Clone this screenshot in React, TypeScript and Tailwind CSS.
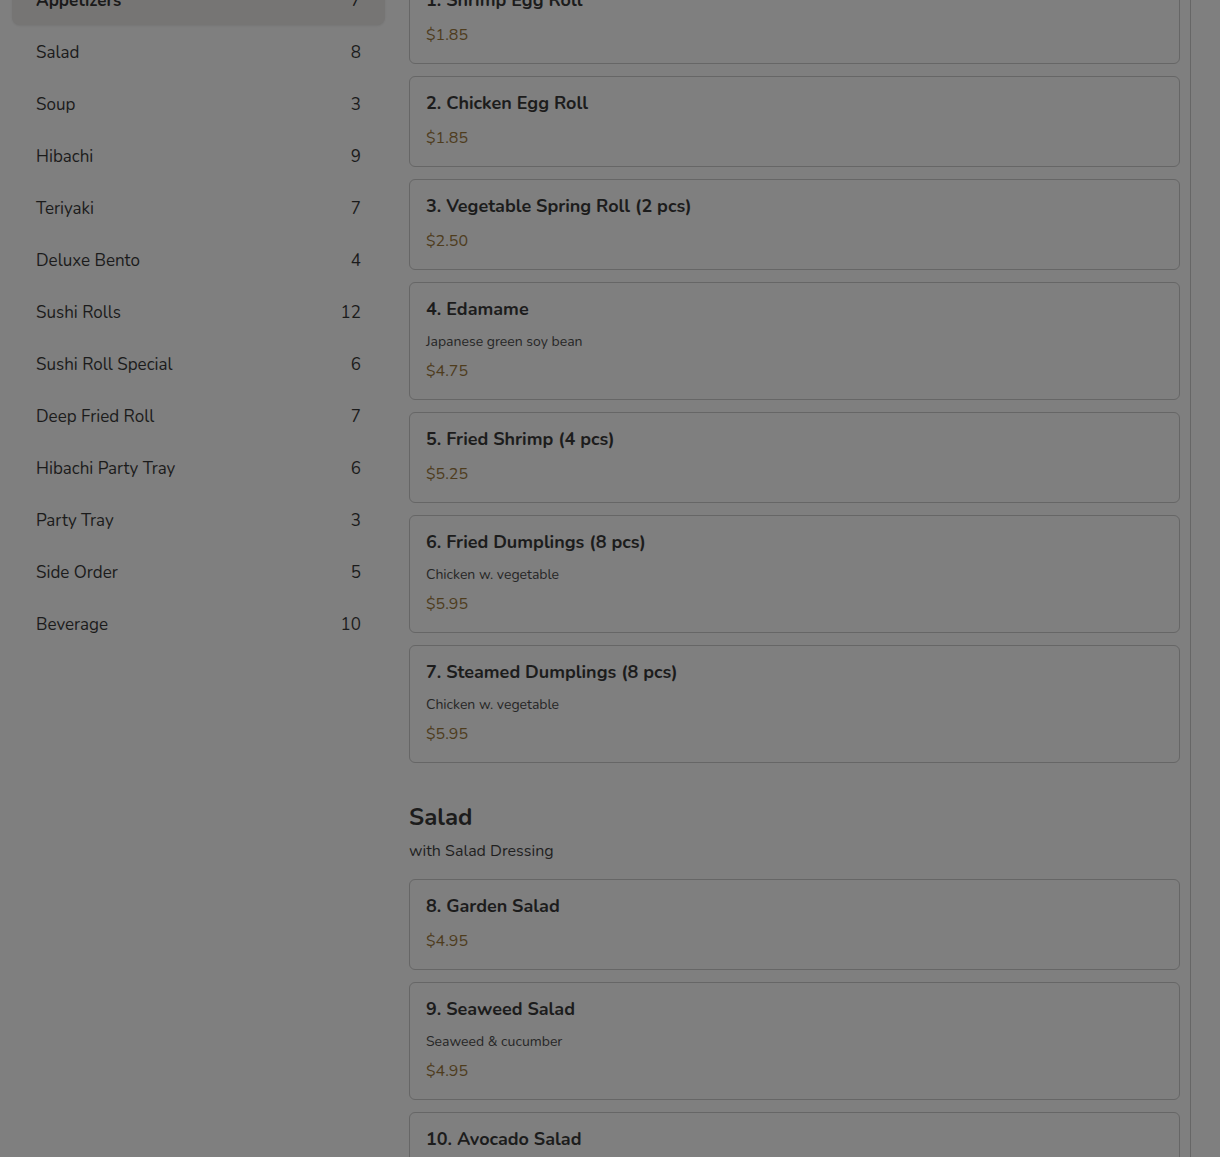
import React from "react";

type Item = { name: string; desc?: string; price: string };

const categories: [string, number][] = [
  ["Appetizers", 7],
  ["Salad", 8],
  ["Soup", 3],
  ["Hibachi", 9],
  ["Teriyaki", 7],
  ["Deluxe Bento", 4],
  ["Sushi Rolls", 12],
  ["Sushi Roll Special", 6],
  ["Deep Fried Roll", 7],
  ["Hibachi Party Tray", 6],
  ["Party Tray", 3],
  ["Side Order", 5],
  ["Beverage", 10],
];

const appetizers: Item[] = [
  { name: "1. Shrimp Egg Roll", price: "$1.85" },
  { name: "2. Chicken Egg Roll", price: "$1.85" },
  { name: "3. Vegetable Spring Roll (2 pcs)", price: "$2.50" },
  { name: "4. Edamame", desc: "Japanese green soy bean", price: "$4.75" },
  { name: "5. Fried Shrimp (4 pcs)", price: "$5.25" },
  { name: "6. Fried Dumplings (8 pcs)", desc: "Chicken w. vegetable", price: "$5.95" },
  { name: "7. Steamed Dumplings (8 pcs)", desc: "Chicken w. vegetable", price: "$5.95" },
];

const salads: Item[] = [
  { name: "8. Garden Salad", price: "$4.95" },
  { name: "9. Seaweed Salad", desc: "Seaweed & cucumber", price: "$4.95" },
  { name: "10. Avocado Salad", price: "$5.95" },
];

function MenuCard({ item }: { item: Item }) {
  return (
    <div className="rounded-md border border-[#666666] px-4 pt-[15px] pb-4">
      <h3 className="text-[18px] font-bold leading-[22px] text-[#1c1c1c] mb-[12px]">{item.name}</h3>
      {item.desc && (
        <p className="text-[14px] leading-[19px] text-[#262626] mb-2">{item.desc}</p>
      )}
      <div className="text-[16px] leading-6 text-[#4e3c1d]">{item.price}</div>
    </div>
  );
}

export default function App() {
  return (
    <div
      className="h-[1157px] w-full overflow-hidden bg-[#7f7f7f] text-[#1c1c1c]"
      style={{ fontFamily: "Nunito, Lato, 'Noto Sans', sans-serif" }}
    >
      <div className="flex items-start">
        {/* Category sidebar */}
        <nav className="ml-3 w-[373px] -mt-[23px] flex flex-col gap-1">
          {categories.map(([name, count], i) => (
            <div
              key={name}
              className={
                i === 0
                  ? "flex h-12 items-center justify-between rounded-lg bg-[#767574] px-6 text-[17px] font-bold text-[#1a1a1a] shadow-[0_1px_2px_rgba(0,0,0,0.08)]"
                  : "flex h-12 items-center justify-between rounded-lg px-6 text-[17px] text-[#1b1b1b]"
              }
            >
              <span>{name}</span>
              <span className="font-normal">{count}</span>
            </div>
          ))}
        </nav>

        {/* Menu list */}
        <main className="ml-6 w-[782px] border-r border-[#666666] pr-[10px] -mt-[27px]">
          <div className="flex flex-col gap-3">
            {appetizers.map((it) => (
              <MenuCard key={it.name} item={it} />
            ))}
          </div>

          <section className="mt-[38px]">
            <h2 className="text-[24px] font-bold leading-8 text-[#1c1c1c]">Salad</h2>
            <p className="mt-[6px] text-[16px] leading-6 text-[#1f1f1f]">with Salad Dressing</p>
            <div className="mt-[16px] flex flex-col gap-3">
              {salads.map((it) => (
                <MenuCard key={it.name} item={it} />
              ))}
            </div>
          </section>
        </main>
      </div>
    </div>
  );
}
